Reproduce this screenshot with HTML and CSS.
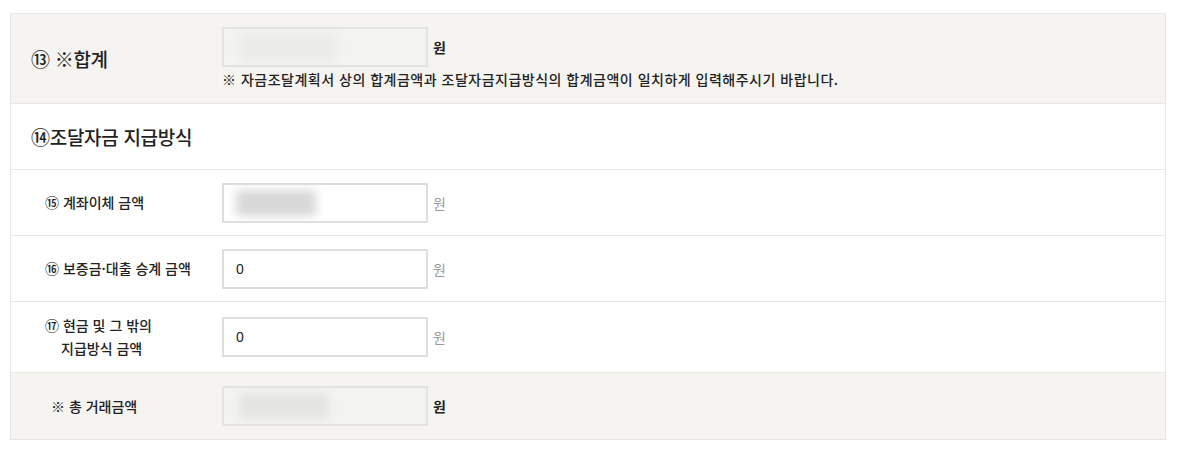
FILE: index.html
```html
<!DOCTYPE html>
<html lang="ko">
<head>
<meta charset="utf-8">
<link rel="stylesheet" href="styles.css">
</head>
<body>
<div class="table">
  <div class="row row-sum">
    <div class="label label-lg">⑬ ※합계</div>
    <div class="field-col">
      <div class="field-line">
        <div class="input readonly"><span class="blur blur-light"></span></div>
        <span class="unit unit-strong">원</span>
      </div>
      <p class="note">※ 자금조달계획서 상의 합계금액과 조달자금지급방식의 합계금액이 일치하게 입력해주시기 바랍니다.</p>
    </div>
  </div>
  <div class="row row-title">
    <div class="label label-lg">⑭조달자금 지급방식</div>
  </div>
  <div class="row row-item">
    <div class="label label-sub">⑮ 계좌이체 금액</div>
    <div class="field-line">
      <div class="input"><span class="blur blur-dark"></span></div>
      <span class="unit">원</span>
    </div>
  </div>
  <div class="row row-item">
    <div class="label label-sub">⑯ 보증금·대출 승계 금액</div>
    <div class="field-line">
      <div class="input">0</div>
      <span class="unit">원</span>
    </div>
  </div>
  <div class="row row-item row-tall">
    <div class="label label-sub">⑰ 현금 및 그 밖의<br><span class="indent">지급방식 금액</span></div>
    <div class="field-line">
      <div class="input">0</div>
      <span class="unit">원</span>
    </div>
  </div>
  <div class="row row-total">
    <div class="label label-total">※ 총 거래금액</div>
    <div class="field-line">
      <div class="input readonly"><span class="blur blur-mid"></span></div>
      <span class="unit unit-strong">원</span>
    </div>
  </div>
</div>
</body>
</html>
```
FILE: styles.css
```css
* { box-sizing: border-box; }
body {
  margin: 0;
  padding: 13px 0 0 10px;
  background: #fff;
  font-family: "Malgun Gothic", "Noto Sans CJK KR", "Noto Sans", sans-serif;
  color: #222;
}
.table {
  width: 1156px;
  border: 1px solid #e6e6e4;
}
.row {
  display: grid;
  grid-template-columns: 211px 1fr;
  align-items: center;
  border-top: 1px solid #e8e8e6;
}
.row:first-child { border-top: none; }
.row-sum { height: 89px; background: #f5f4f1; }
.row-title { height: 66px; }
.row-item { height: 66px; }
.row-tall { height: 71px; }
.row-total { height: 67px; background: #f5f4f1; }
.label { padding-left: 20px; }
.label-lg { font-size: 19px; font-weight: 500; letter-spacing: -0.3px; color: #222; }
.label-sub { padding-left: 34px; font-size: 14px; font-weight: 500; line-height: 23px; color: #222; }
.label-sub .indent { padding-left: 16px; }
.label-total { padding-left: 40px; font-size: 14px; font-weight: 500; color: #222; }
.field-col { display: flex; flex-direction: column; align-self: start; padding-top: 13px; }
.field-line { display: flex; align-items: center; gap: 5px; }
.input {
  width: 206px;
  height: 40px;
  border: 2px solid #dedede;
  background: #fff;
  display: flex;
  align-items: center;
  padding-left: 12px;
  font-size: 14px;
  color: #222;
  font-family: "Liberation Sans", Arial, sans-serif;
  overflow: hidden;
}
.input.readonly { background: #f3f3f1; border-color: #e3e3e1; }
.blur { display: block; height: 26px; filter: blur(5px); }
.blur-light { width: 96px; background: #ebebea; margin-left: 4px; }
.blur-dark { width: 80px; background: #d8d8d8; }
.blur-mid { width: 88px; background: #e4e4e3; margin-left: 4px; }
.unit { font-size: 14px; color: #9a9a9a; }
.unit-strong { color: #222; font-weight: 700; }
.note {
  margin: 3px 0 0;
  font-size: 14px;
  line-height: 18px;
  letter-spacing: 0.5px;
  font-weight: 500;
  color: #222;
}
```
